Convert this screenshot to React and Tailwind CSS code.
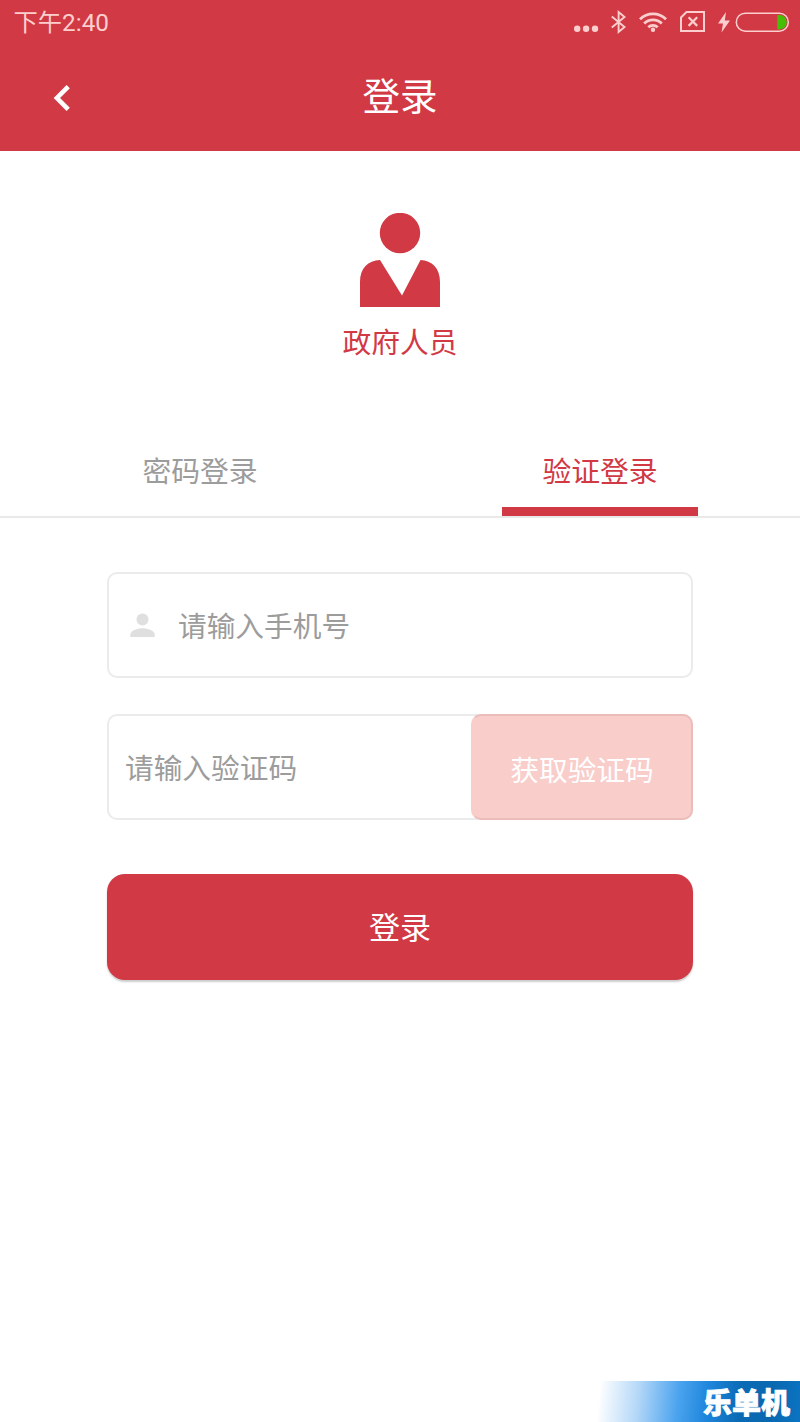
import { useState } from "react"
import { clsx } from "clsx"

const TABS = [
  { id: "password", label: "密码登录" },
  { id: "code", label: "验证登录" },
]

function StatusBar() {
  return (
    <div className="flex h-[45px] items-center justify-between pr-[10px] pl-[13.5px] text-[#fccfce]">
      <span className="pt-px font-['Roboto','Noto_Sans_CJK_SC',sans-serif] text-[24.3px] leading-none">下午2:40</span>
      <svg width="218" height="45" viewBox="572 0 218 45" fill="none" stroke="currentColor">
        <g fill="currentColor" stroke="none">
          <circle cx="577.2" cy="28.8" r="3.2" />
          <circle cx="586.1" cy="28.8" r="3.2" />
          <circle cx="595" cy="28.8" r="3.2" />
        </g>
        <path d="M611.8 16.5 L624.5 27 L618.6 32 V12 L624.5 17 L611.8 27.5" strokeWidth="1.9" />
        <g strokeWidth="2.8">
          <path d="M640 19.2 A18.5 18.5 0 0 1 666 19.2" />
          <path d="M644.2 23.4 A12.6 12.6 0 0 1 661.8 23.4" />
          <path d="M648.3 27.2 A6.8 6.8 0 0 1 657.7 27.2" />
        </g>
        <circle cx="653" cy="29.8" r="2.2" fill="currentColor" stroke="none" />
        <path d="M686.5 12 H704 V31 H681 V17.5 Z" strokeWidth="2" />
        <path d="M688.6 17.3 L697.2 25.9 M697.2 17.3 L688.6 25.9" strokeWidth="2.2" />
        <path d="M726 12 L718 23.5 H723 L721.5 32.5 L730 20.5 H724.8 Z" fill="currentColor" stroke="none" />
        <rect x="736.3" y="13.2" width="52" height="18" rx="9" strokeWidth="1.5" />
        <path d="M777.3 15 H779.5 A7.2 7.2 0 0 1 779.5 29.4 H777.3 Z" fill="#45be05" stroke="none" />
      </svg>
    </div>
  )
}

function Header() {
  return (
    <header className="grid h-[106px] grid-cols-3 items-center pb-[8px] text-white">
      <button className="pt-[7px] pl-[52px]">
        <svg width="20" height="28" viewBox="0 0 20 28" fill="none" stroke="currentColor" strokeWidth="4.6">
          <path d="M16.2 2.6 L4.9 14 L16.2 25.4" />
        </svg>
      </button>
      <h1 className="text-center text-[37.5px] leading-none">登录</h1>
    </header>
  )
}

function Role() {
  return (
    <div className="flex flex-col items-center pt-[62px] text-[#d13945]">
      <svg width="80" height="94" viewBox="0 0 80 94" fill="currentColor">
        <circle cx="40" cy="20" r="20.2" />
        <path d="M0 94 V69 C0 55 8 47.5 20 47 L42 82.5 L60.5 47 C72 47.5 80 55 80 69 V94 Z" />
      </svg>
      <p className="mt-[19px] text-[28.8px] leading-[30px]">政府人员</p>
    </div>
  )
}

function Tabs({ active, onChange }) {
  return (
    <div className="mt-[82px] flex h-[80px] border-b-2 border-[#e9e9e9]">
      {TABS.map((tab) => (
        <button
          key={tab.id}
          onClick={() => onChange(tab.id)}
          className={clsx(
            "flex flex-1 flex-col items-center justify-between pt-[15px] text-[28.8px]",
            active === tab.id ? "text-[#d13945]" : "text-[#9c9c9c]"
          )}
        >
          <span className="leading-[34px]">{tab.label}</span>
          {active === tab.id && <span className="h-[9px] w-[196px] bg-[#d13945]" />}
        </button>
      ))}
    </div>
  )
}

function LoginForm() {
  return (
    <form className="mx-[107px] mt-[54px] flex flex-col" onSubmit={(e) => e.preventDefault()}>
      <label className="flex h-[106px] items-center rounded-[10px] border-2 border-[#ebebeb] pl-[21px]">
        <svg width="25" height="25" viewBox="0 0 25 25" fill="#dfdfdf">
          <circle cx="12.5" cy="6.4" r="6" />
          <path d="M0.3 24 V21.5 C0.3 17.5 7.5 15.2 12.5 15.2 C17.5 15.2 24.7 17.5 24.7 21.5 V24 Z" />
        </svg>
        <input
          placeholder="请输入手机号"
          className="ml-[23px] min-w-0 flex-1 text-[28.7px] outline-none placeholder:text-[#9c9c9c]"
        />
      </label>
      <div className="mt-[36px] flex h-[106px] rounded-[10px] bg-white inset-ring-2 inset-ring-[#ebebeb]">
        <input
          placeholder="请输入验证码"
          className="min-w-0 flex-1 pl-[18px] text-[28.7px] outline-none placeholder:text-[#9c9c9c]"
        />
        <button className="w-[222px] rounded-[10px] border-2 border-[#ecbcbb] border-l-[#f9cdca] bg-[#f9cdca] pt-[4px] text-[28.7px] text-white">
          获取验证码
        </button>
      </div>
      <button className="mt-[54px] h-[106px] rounded-[18px] bg-[#d13945] pb-[2px] text-[31px] text-white shadow-[0_2px_2px_rgba(0,0,0,0.2)]">
        登录
      </button>
    </form>
  )
}

export default function App() {
  const [tab, setTab] = useState("code")

  return (
    <div className="flex h-[1422px] w-[800px] flex-col bg-white font-['Noto_Sans_CJK_SC',sans-serif]">
      <div className="bg-[#d13945]">
        <StatusBar />
        <Header />
      </div>
      <Role />
      <Tabs active={tab} onChange={setTab} />
      <LoginForm />
      <div className="mt-auto flex h-[41px] w-[202px] items-center justify-end self-end bg-[linear-gradient(96deg,#ffffff_1%,#b5d8f8_20%,#4aa3ee_40%,#1e86dc_54%,#0a6ab4_70%,#0a68b0_85%,#0b74c2_100%)] pr-[10px]">
        <span className="pb-px text-[29px] leading-none font-black text-white [-webkit-text-stroke:0.8px_white]">乐单机</span>
      </div>
    </div>
  )
}
